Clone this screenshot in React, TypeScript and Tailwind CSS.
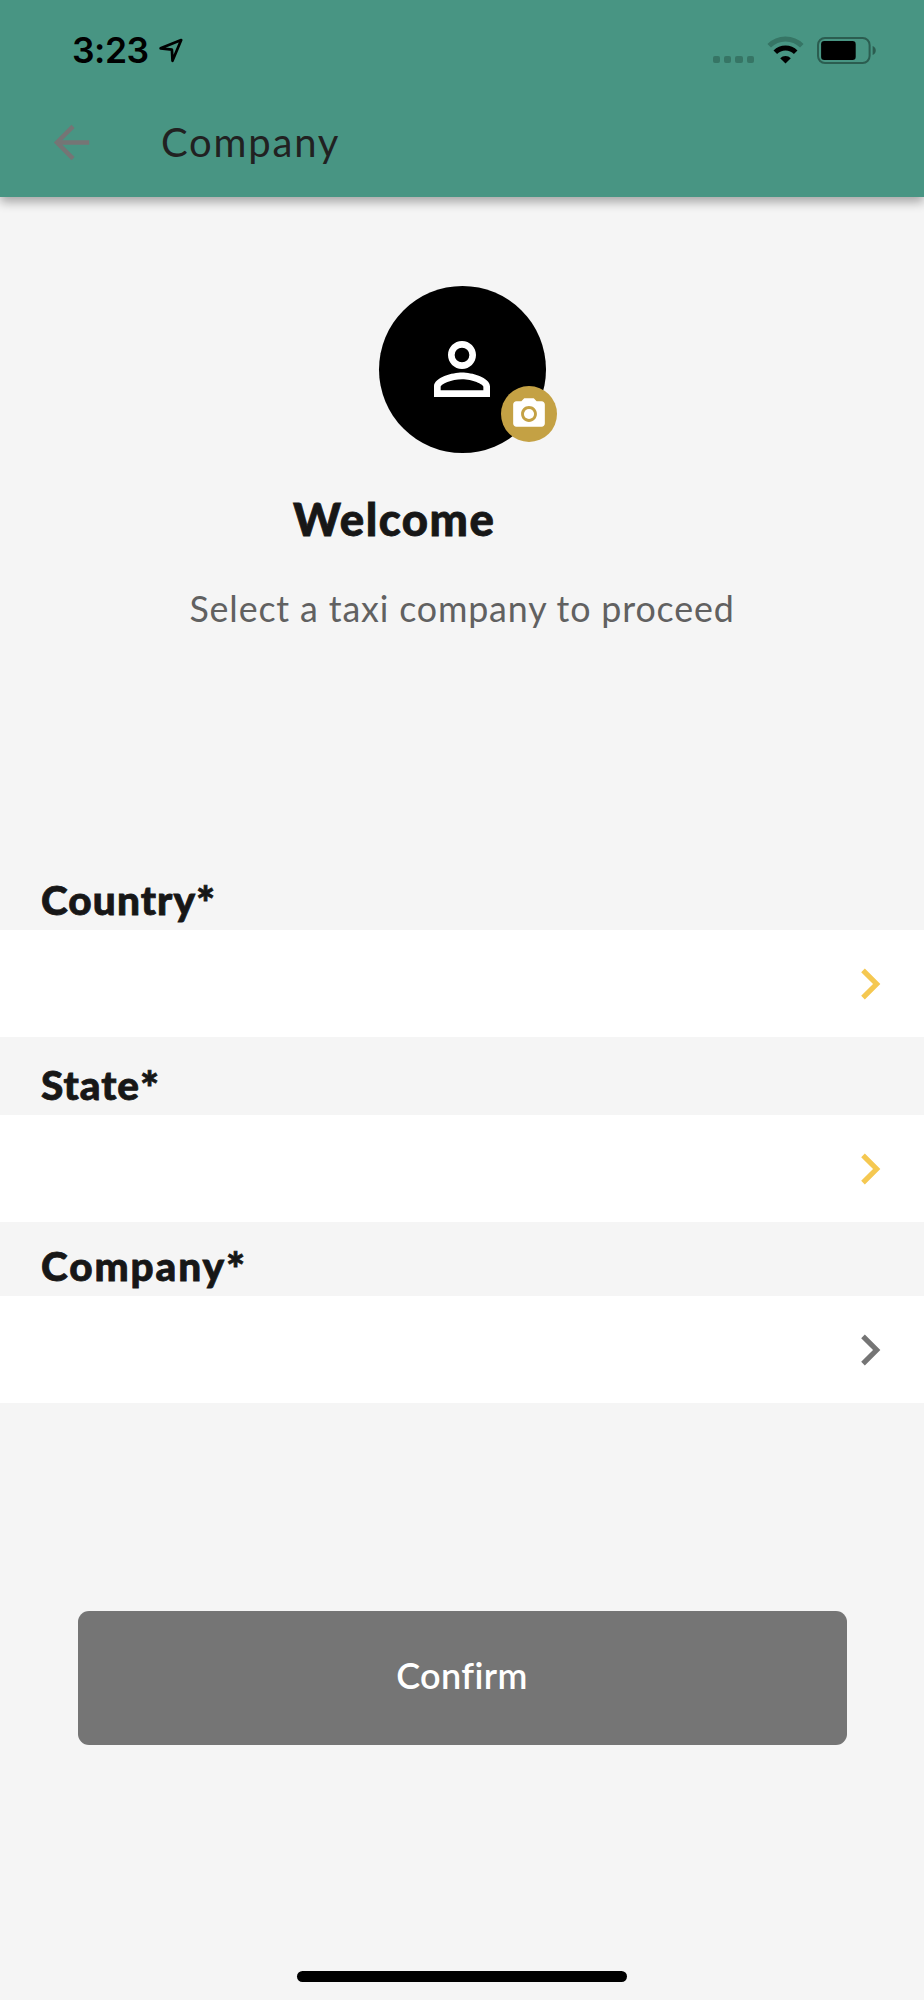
import React from "react";
import { MdArrowBack, MdCameraAlt, MdChevronRight, MdPersonOutline } from "react-icons/md";

function StatusBar() {
  return (
    <div className="flex h-[100px] justify-between pl-[72px] pr-[47px]">
      <div className="flex items-start">
        <span className="mt-[28px] w-[86px] whitespace-nowrap font-[family-name:Inter,sans-serif] text-[35.5px] font-semibold leading-[46px] tracking-[-0.5px] text-black">
          3:23
        </span>
        <svg className="mt-[37px] h-[27px] w-[27px]" viewBox="0 0 27 27" fill="none">
          <path
            d="M2.6 11.3 L23.2 3.1 L14.5 23.8 L13.9 12.6 Z"
            stroke="#000"
            strokeWidth="2.7"
            strokeLinejoin="round"
          />
        </svg>
      </div>
      <div className="flex items-start">
        <div className="mt-[56px] flex gap-[4px]">
          <i className="h-[7px] w-[7.3px] rounded-[2px] bg-[#367565]" />
          <i className="h-[7px] w-[7.3px] rounded-[2px] bg-[#367565]" />
          <i className="h-[7px] w-[7.3px] rounded-[2px] bg-[#367565]" />
          <i className="h-[7px] w-[7.3px] rounded-[2px] bg-[#367565]" />
        </div>
        <svg className="ml-[13px] mt-[36px] h-[28px] w-[37px]" viewBox="0 0 37 28" fill="none">
          <path d="M2.2 9.8 A23 23 0 0 1 34.8 9.8" stroke="#367565" strokeWidth="5" />
          <path d="M8.3 16.2 A14.3 14.3 0 0 1 28.7 16.2" stroke="#000" strokeWidth="5" />
          <path d="M18.5 27.5 L13.2 22.2 A7.5 7.5 0 0 1 23.8 22.2 Z" fill="#000" />
        </svg>
        <svg className="ml-[13px] mt-[35px] h-[29px] w-[60px]" viewBox="0 0 60 29" fill="none">
          <rect x="1" y="3" width="51.6" height="25" rx="7" stroke="#2b5d50" strokeWidth="2" />
          <rect x="4.1" y="6" width="34.6" height="19" rx="3.2" fill="#000" />
          <path d="M55.6 11 C59.8 12.5 59.8 18.5 55.6 20 Z" fill="#2b5d50" />
        </svg>
      </div>
    </div>
  );
}

function Field({
  label,
  labelClass,
  chevronClass,
}: {
  label: string;
  labelClass: string;
  chevronClass: string;
}) {
  return (
    <section>
      <h2
        className={`flex items-end pl-[41px] text-[40.5px] font-black leading-[48px] text-[#171717] [-webkit-text-stroke:0.8px_#171717] ${labelClass}`}
      >
        {label}
        <span className="-mb-[3px] text-[45px] leading-[48px]">*</span>
      </h2>
      <button className="flex h-[107px] w-full items-center justify-end bg-white pr-[23px]">
        <MdChevronRight className={`h-[62px] w-[62px] ${chevronClass}`} />
      </button>
    </section>
  );
}

export default function App() {
  return (
    <div className="flex h-[2000px] w-[924px] flex-col overflow-hidden bg-[#f5f5f5] font-['Lato','Liberation_Sans',sans-serif]">
      <header className="h-[196.5px] shrink-0 bg-[#489583] shadow-[0_5px_10px_rgba(0,0,0,0.33)]">
        <StatusBar />
        <div className="flex h-[85px] items-center pl-[45px]">
          <MdArrowBack className="h-[53px] w-[53px] text-[#757575]" />
          <h1 className="mb-[2px] ml-[63px] text-[40px] leading-[48px] tracking-[1.8px] text-[#212121]">
            Company
          </h1>
        </div>
      </header>

      <div className="flex flex-col items-center pt-[89px]">
        <div className="relative flex h-[167px] w-[167px] items-center justify-center rounded-full bg-black">
          <MdPersonOutline className="h-[84px] w-[84px] text-white" />
          <span className="absolute left-[122.5px] top-[100.5px] flex h-[56px] w-[56px] items-center justify-center rounded-full bg-[#c4a144]">
            <MdCameraAlt className="h-[38px] w-[38px] text-white" />
          </span>
        </div>
      </div>
      <p className="mt-[40.5px] pl-[293px] text-[45.5px] font-black leading-[52px] tracking-[1.5px] text-[#171717] [-webkit-text-stroke:0.8px_#171717]">
        Welcome
      </p>
      <p className="mt-[39.5px] text-center text-[35.8px] leading-[48px] tracking-[0.85px] text-[#616161]">
        Select a taxi company to proceed
      </p>

      <div className="mt-[224.5px]">
        <Field
          label="Country"
          labelClass="h-[73px] pb-[6px] tracking-[1.1px]"
          chevronClass="text-[#f5c851]"
        />
        <Field
          label="State"
          labelClass="h-[78px] pb-[6px] tracking-[1px]"
          chevronClass="text-[#f5c851]"
        />
        <Field
          label="Company"
          labelClass="h-[74px] pb-[6px] tracking-[1.9px]"
          chevronClass="text-[#757575]"
        />
      </div>

      <button className="mx-[77.5px] mt-[208px] h-[133.5px] shrink-0 rounded-[11px] bg-[#757575] pb-[5px] text-[36px] font-semibold tracking-[0.4px] text-white">
        Confirm
      </button>

      <div className="mx-auto mb-[18px] mt-auto h-[11px] w-[330px] shrink-0 rounded-full bg-black" />
    </div>
  );
}
